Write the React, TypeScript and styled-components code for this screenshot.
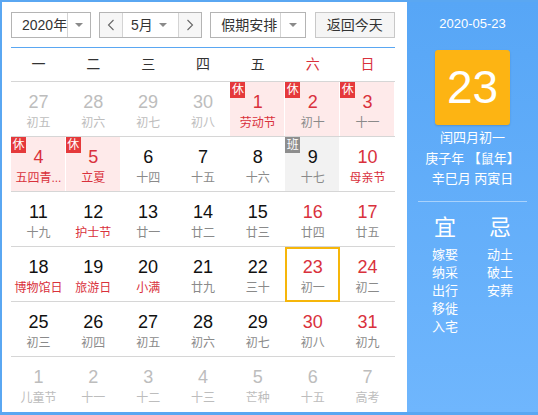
import React from "react";
import styled, { createGlobalStyle } from "styled-components";

const GlobalStyle = createGlobalStyle`
  * { box-sizing: border-box; }
  body {
    margin: 0;
    font-family: "Liberation Sans", "Noto Sans CJK SC", sans-serif;
    background: #fff;
  }
`;

const RED = "#d9313c";

const Frame = styled.div`
  width: 538px;
  height: 415px;
  display: flex;
  border-top: 2px solid #5aa7f2;
  border-left: 2px solid #5aa7f2;
  border-bottom: 3px solid #5aa7f2;
  overflow: hidden;
`;

const Main = styled.div`
  width: 405px;
  padding: 10px 12px 0 9px;
  background: #fff;
  display: flex;
  flex-direction: column;
`;

const Toolbar = styled.div`
  display: flex;
  gap: 8px;
  height: 26px;
  font-size: 14px;
  color: #333;
`;

const Select = styled.div<{ $w: number; $arrow: number }>`
  width: ${(p) => p.$w}px;
  height: 26px;
  display: flex;
  border: 1px solid #b4b4b4;
  background: #fff;
  .label {
    flex: 1;
    padding-left: 10px;
    line-height: 24px;
    white-space: nowrap;
  }
  .arrow {
    width: ${(p) => p.$arrow}px;
    border-left: 1px solid #d4d4d4;
    display: flex;
    align-items: center;
    justify-content: center;
  }
`;

const Caret = styled.span`
  width: 0;
  height: 0;
  border-left: 4px solid transparent;
  border-right: 4px solid transparent;
  border-top: 4px solid #8a8a8a;
`;

const MonthGroup = styled.div`
  width: 104px;
  height: 26px;
  display: flex;
  border: 1px solid #b4b4b4;
  background: #fff;
`;

const StepButton = styled.div<{ $side: "l" | "r" }>`
  width: 23px;
  background: #f6f6f6;
  display: flex;
  align-items: center;
  justify-content: center;
  ${(p) => (p.$side === "l" ? "border-right: 1px solid #d4d4d4;" : "border-left: 1px solid #d4d4d4;")}
`;

const MonthLabel = styled.div`
  flex: 1;
  display: flex;
  align-items: center;
  justify-content: space-between;
  padding: 0 11px 0 8px;
  line-height: 24px;
`;

const TodayButton = styled.div`
  width: 81px;
  height: 26px;
  border: 1px solid #c8c8c8;
  background: #f5f5f5;
  text-align: center;
  line-height: 24px;
  margin-left: 1px;
`;

const Calendar = styled.div`
  margin-top: 9px;
  border-top: 1px solid #5aa7f2;
  display: grid;
  grid-template-columns: repeat(7, 1fr);
`;

const WeekHead = styled.div<{ $red: boolean }>`
  height: 34px;
  border-bottom: 1px solid #d6d6d6;
  text-align: center;
  line-height: 33px;
  font-size: 14px;
  color: ${(p) => (p.$red ? RED : "#333")};
`;

type Day = {
  d: number;
  l: string;
  other?: boolean;
  red?: boolean;
  fest?: boolean;
  badge?: "休" | "班";
  today?: boolean;
};

const Cell = styled.div<{ $bg: string; $today: boolean; $last: boolean }>`
  position: relative;
  height: 55px;
  background: ${(p) => p.$bg};
  border-bottom: ${(p) => (p.$last ? "none" : "1px solid #d6d6d6")};
  ${(p) => (p.$bg !== "transparent" ? "box-shadow: inset -1px 0 0 #fff;" : "")}
  ${(p) => (p.$today ? "border: 2px solid #f6b60a;" : "")}
  display: flex;
  flex-direction: column;
  align-items: center;
  padding-top: ${(p) => (p.$today ? 8 : 10)}px;
`;

const Num = styled.div<{ $color: string }>`
  font-size: 18px;
  line-height: 20px;
  color: ${(p) => p.$color};
`;

const Lunar = styled.div<{ $color: string }>`
  margin-top: 3px;
  font-size: 12px;
  line-height: 16px;
  color: ${(p) => p.$color};
  white-space: nowrap;
`;

const Badge = styled.span<{ $bg: string }>`
  position: absolute;
  top: 0;
  left: 0;
  width: 15px;
  height: 16px;
  background: ${(p) => p.$bg};
  color: #fff;
  font-size: 12px;
  line-height: 16px;
  text-align: center;
`;

const Side = styled.div`
  flex: 1;
  background: linear-gradient(#57a6f6, #6fb6fd);
  display: flex;
  flex-direction: column;
  align-items: center;
  color: #fff;
  padding-top: 13px;
`;

const DateText = styled.div`
  font-size: 13px;
  line-height: 18px;
`;

const BigDay = styled.div`
  margin-top: 17px;
  width: 75px;
  height: 75px;
  border-radius: 3px;
  background: #fdb413;
  box-shadow: 0 1px 2px rgba(0, 0, 0, 0.15);
  font-size: 46px;
  line-height: 75px;
  text-align: center;
`;

const LunarInfo = styled.div`
  margin-top: 3px;
  font-size: 13px;
  line-height: 20.5px;
  text-align: center;
  white-space: nowrap;
`;

const Divider = styled.div`
  width: 109px;
  height: 1px;
  margin-top: 11px;
  background: rgba(255, 255, 255, 0.45);
`;

const Advice = styled.div`
  margin-top: 13px;
  width: 110px;
  display: grid;
  grid-template-columns: 1fr 1fr;
`;

const AdviceCol = styled.div`
  display: flex;
  flex-direction: column;
  align-items: center;
  .title {
    font-size: 22px;
    line-height: 26px;
    margin-bottom: 5px;
  }
  .item {
    font-size: 13px;
    line-height: 18px;
  }
`;

const Chevron = ({ dir }: { dir: "l" | "r" }) => (
  <svg width="8" height="12" viewBox="0 0 8 12">
    <path
      d={dir === "l" ? "M6.5 1 L1.5 6 L6.5 11" : "M1.5 1 L6.5 6 L1.5 11"}
      fill="none"
      stroke="#666"
      strokeWidth="1.1"
    />
  </svg>
);

const weeks = ["一", "二", "三", "四", "五", "六", "日"];

const days: Day[] = [
  { d: 27, l: "初五", other: true },
  { d: 28, l: "初六", other: true },
  { d: 29, l: "初七", other: true },
  { d: 30, l: "初八", other: true },
  { d: 1, l: "劳动节", red: true, fest: true, badge: "休" },
  { d: 2, l: "初十", red: true, badge: "休" },
  { d: 3, l: "十一", red: true, badge: "休" },
  { d: 4, l: "五四青...", red: true, fest: true, badge: "休" },
  { d: 5, l: "立夏", red: true, fest: true, badge: "休" },
  { d: 6, l: "十四" },
  { d: 7, l: "十五" },
  { d: 8, l: "十六" },
  { d: 9, l: "十七", badge: "班" },
  { d: 10, l: "母亲节", red: true, fest: true },
  { d: 11, l: "十九" },
  { d: 12, l: "护士节", fest: true },
  { d: 13, l: "廿一" },
  { d: 14, l: "廿二" },
  { d: 15, l: "廿三" },
  { d: 16, l: "廿四", red: true },
  { d: 17, l: "廿五", red: true },
  { d: 18, l: "博物馆日", fest: true },
  { d: 19, l: "旅游日", fest: true },
  { d: 20, l: "小满", fest: true },
  { d: 21, l: "廿九" },
  { d: 22, l: "三十" },
  { d: 23, l: "初一", red: true, today: true },
  { d: 24, l: "初二", red: true },
  { d: 25, l: "初三" },
  { d: 26, l: "初四" },
  { d: 27, l: "初五" },
  { d: 28, l: "初六" },
  { d: 29, l: "初七" },
  { d: 30, l: "初八", red: true },
  { d: 31, l: "初九", red: true },
  { d: 1, l: "儿童节", other: true },
  { d: 2, l: "十一", other: true },
  { d: 3, l: "十二", other: true },
  { d: 4, l: "十三", other: true },
  { d: 5, l: "芒种", other: true },
  { d: 6, l: "十五", other: true },
  { d: 7, l: "高考", other: true },
];

const good = ["嫁娶", "纳采", "出行", "移徙", "入宅"];
const bad = ["动土", "破土", "安葬"];

const DayCell = ({ day, last }: { day: Day; last: boolean }) => {
  const bg = day.badge === "休" ? "#feeaea" : day.badge === "班" ? "#f2f2f2" : "transparent";
  const numColor = day.other ? "#bdbdbd" : day.red ? RED : "#111";
  const lunarColor = day.other ? "#bdbdbd" : day.fest ? RED : "#8a8a8a";
  return (
    <Cell $bg={bg} $today={!!day.today} $last={last}>
      {day.badge && <Badge $bg={day.badge === "休" ? "#e5393b" : "#8e8e8e"}>{day.badge}</Badge>}
      <Num $color={numColor}>{day.d}</Num>
      <Lunar $color={lunarColor}>{day.l}</Lunar>
    </Cell>
  );
};

export default function App() {
  return (
    <>
      <GlobalStyle />
      <Frame>
        <Main>
          <Toolbar>
            <Select $w={80} $arrow={24}>
              <span className="label">2020年</span>
              <span className="arrow">
                <Caret />
              </span>
            </Select>
            <MonthGroup>
              <StepButton $side="l">
                <Chevron dir="l" />
              </StepButton>
              <MonthLabel>
                <span>5月</span>
                <Caret />
              </MonthLabel>
              <StepButton $side="r">
                <Chevron dir="r" />
              </StepButton>
            </MonthGroup>
            <Select $w={96} $arrow={25}>
              <span className="label">假期安排</span>
              <span className="arrow">
                <Caret />
              </span>
            </Select>
            <TodayButton>返回今天</TodayButton>
          </Toolbar>
          <Calendar>
            {weeks.map((w, i) => (
              <WeekHead key={w} $red={i >= 5}>
                {w}
              </WeekHead>
            ))}
            {days.map((day, i) => (
              <DayCell key={i} day={day} last={i >= 35} />
            ))}
          </Calendar>
        </Main>
        <Side>
          <DateText>2020-05-23</DateText>
          <BigDay>23</BigDay>
          <LunarInfo>
            闰四月初一
            <br />
            庚子年 【鼠年】
            <br />
            辛巳月 丙寅日
          </LunarInfo>
          <Divider />
          <Advice>
            <AdviceCol>
              <span className="title">宜</span>
              {good.map((g) => (
                <span className="item" key={g}>
                  {g}
                </span>
              ))}
            </AdviceCol>
            <AdviceCol>
              <span className="title">忌</span>
              {bad.map((g) => (
                <span className="item" key={g}>
                  {g}
                </span>
              ))}
            </AdviceCol>
          </Advice>
        </Side>
      </Frame>
    </>
  );
}
